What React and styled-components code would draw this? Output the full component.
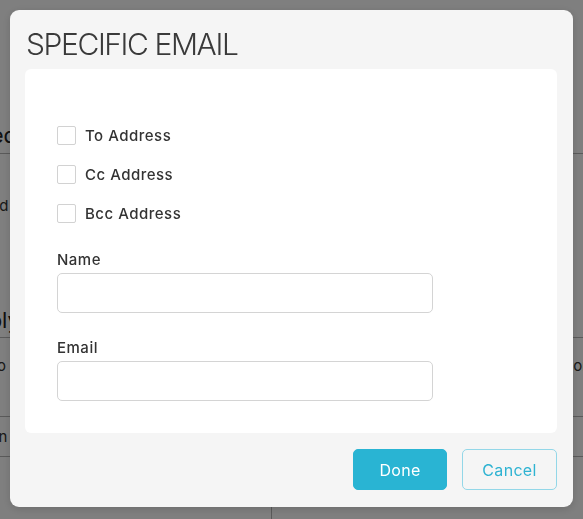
import React from 'react'
import styled, { createGlobalStyle } from 'styled-components'

const GlobalStyle = createGlobalStyle`
  html, body {
    margin: 0;
    padding: 0;
    background: #ffffff;
    font-family: Inter, "Noto Sans", sans-serif;
    color: #333333;
  }
  * { box-sizing: border-box; }
`

// page sitting underneath the dimmed overlay
const BgPage = styled.div`
  width: 583px;
  height: 519px;
  overflow: hidden;
  background: #ffffff;
  padding-top: 120px;
`

const BgHeading = styled.div`
  font-size: 22px;
  line-height: 30px;
  color: #222;
  margin-left: ${p => p.shift}px;
  margin-top: ${p => p.top || 0}px;
  white-space: nowrap;
`

const BgRule = styled.div`
  height: 1px;
  background: #b5b5b5;
  margin-top: ${p => p.top || 0}px;
`

const BgText = styled.div`
  font-size: 15px;
  line-height: 20px;
  color: #333;
  white-space: nowrap;
  margin-left: ${p => p.shift}px;
  margin-top: ${p => p.top || 0}px;
`

const BgRow = styled.div`
  display: flex;
  justify-content: space-between;
  margin-top: ${p => p.top || 0}px;
  margin-left: -21px;
  margin-right: -5px;
  font-size: 15px;
  line-height: 20px;
  color: #333;
  white-space: nowrap;
`

const BgCols = styled.div`
  display: grid;
  grid-template-columns: 272px 1fr;
  height: 80px;
  & > div:first-child { border-right: 1px solid #b5b5b5; }
`

const Overlay = styled.div`
  position: fixed;
  inset: 0;
  background: rgba(0, 0, 0, 0.5);
  display: flex;
  justify-content: center;
  align-items: flex-start;
  padding: 10px;
`

const Modal = styled.div`
  width: 563px;
  height: 497px;
  background: #f5f5f5;
  border-radius: 9px;
  padding: 16px 16px 17px 15px;
  display: flex;
  flex-direction: column;
  box-shadow: 0 2px 8px rgba(0, 0, 0, 0.15);
`

const Title = styled.h2`
  margin: 0 0 7px 1px;
  font-size: 30px;
  line-height: 36px;
  font-weight: 300;
  color: #3a3a3a;
  letter-spacing: -1.4px;
`

const Card = styled.div`
  background: #ffffff;
  border-radius: 6px;
  padding: 57px 32px 32px;
  display: flex;
  flex-direction: column;
`

const CheckList = styled.div`
  display: flex;
  flex-direction: column;
  gap: 20px;
  margin-bottom: 26px;
`

const CheckRow = styled.label`
  display: flex;
  align-items: center;
  gap: 9px;
  font-size: 15px;
  font-weight: 500;
  letter-spacing: 0.5px;
  color: #333;
  line-height: 19px;
  cursor: pointer;
`

const Box = styled.input.attrs({ type: 'checkbox' })`
  appearance: none;
  margin: 0;
  width: 19px;
  height: 19px;
  border: 1px solid #d2d2d2;
  border-radius: 2px;
  background: #fff;
`

const Field = styled.div`
  display: flex;
  flex-direction: column;
  & + & { margin-top: 24px; }
`

const Label = styled.label`
  font-size: 15px;
  font-weight: 500;
  letter-spacing: 0.5px;
  line-height: 22px;
  color: #333;
  margin-bottom: 2px;
`

const TextInput = styled.input`
  width: 376px;
  height: 40px;
  border: 1px solid #d4d4d4;
  border-radius: 5px;
  padding: 0 12px;
  font-family: inherit;
  font-size: 15px;
  outline: none;
`

const Footer = styled.div`
  display: flex;
  justify-content: flex-end;
  gap: 15px;
  margin-top: 16px;
`

const Button = styled.button`
  width: ${p => p.w}px;
  height: 41px;
  border-radius: 5px;
  font-family: inherit;
  font-size: 16px;
  font-weight: 400;
  letter-spacing: 0.3px;
  cursor: pointer;
  border: 1px solid ${p => (p.primary ? '#29b4d3' : '#93d7e8')};
  background: ${p => (p.primary ? '#29b4d3' : 'transparent')};
  color: ${p => (p.primary ? '#ffffff' : '#2fb3d2')};
`

export default function App() {
  return (
    <>
      <GlobalStyle />
      <BgPage>
        <BgHeading shift={-74}>Selected</BgHeading>
        <BgRule top={3} />
        <BgText shift={-28} top={42}>Send</BgText>
        <BgHeading shift={-40} top={89}>Apply</BgHeading>
        <BgRule top={2} />
        <BgRow top={18}>
          <span>Info</span>
          <span>Vendor</span>
        </BgRow>
        <BgRule top={40} />
        <BgText shift={-38} top={10}>Action</BgText>
        <BgRule top={9} />
        <BgCols>
          <div />
          <div />
        </BgCols>
      </BgPage>
      <Overlay>
        <Modal>
          <Title>SPECIFIC EMAIL</Title>
          <Card>
            <CheckList>
              <CheckRow><Box />To Address</CheckRow>
              <CheckRow><Box />Cc Address</CheckRow>
              <CheckRow><Box />Bcc Address</CheckRow>
            </CheckList>
            <Field>
              <Label>Name</Label>
              <TextInput />
            </Field>
            <Field>
              <Label>Email</Label>
              <TextInput />
            </Field>
          </Card>
          <Footer>
            <Button primary w={94}>Done</Button>
            <Button w={95}>Cancel</Button>
          </Footer>
        </Modal>
      </Overlay>
    </>
  )
}
